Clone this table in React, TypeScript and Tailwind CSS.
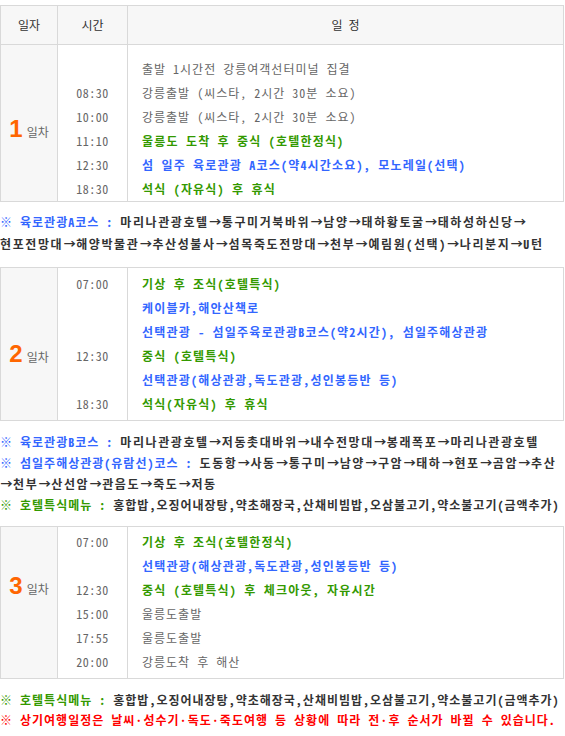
type Tone = "gray" | "green" | "blue";
type Row = { time?: string; text: string; tone: Tone };

const toneClass: Record<Tone, string> = {
  gray: "text-[#666666] tracking-[1px]",
  green: "text-[#339900] font-bold tracking-[1.2px]",
  blue: "text-[#3366ff] font-bold tracking-[1.2px]",
};

const day1: Row[] = [
  { text: "출발 1시간전 강릉여객선터미널 집결", tone: "gray" },
  { time: "08:30", text: "강릉출발 (씨스타, 2시간 30분 소요)", tone: "gray" },
  { time: "10:00", text: "강릉출발 (씨스타, 2시간 30분 소요)", tone: "gray" },
  { time: "11:10", text: "울릉도 도착 후 중식 (호텔한정식)", tone: "green" },
  { time: "12:30", text: "섬 일주 육로관광 A코스(약4시간소요), 모노레일(선택)", tone: "blue" },
  { time: "18:30", text: "석식 (자유식) 후 휴식", tone: "green" },
];

const day2: Row[] = [
  { time: "07:00", text: "기상 후 조식(호텔특식)", tone: "green" },
  { text: "케이블카,해안산책로", tone: "blue" },
  { text: "선택관광 - 섬일주육로관광B코스(약2시간), 섬일주해상관광", tone: "blue" },
  { time: "12:30", text: "중식 (호텔특식)", tone: "green" },
  { text: "선택관광(해상관광,독도관광,성인봉등반 등)", tone: "blue" },
  { time: "18:30", text: "석식(자유식) 후 휴식", tone: "green" },
];

const day3: Row[] = [
  { time: "07:00", text: "기상 후 조식(호텔한정식)", tone: "green" },
  { text: "선택관광(해상관광,독도관광,성인봉등반 등)", tone: "blue" },
  { time: "12:30", text: "중식 (호텔특식) 후 체크아웃, 자유시간", tone: "green" },
  { time: "15:00", text: "울릉도출발", tone: "gray" },
  { time: "17:55", text: "울릉도출발", tone: "gray" },
  { time: "20:00", text: "강릉도착 후 해산", tone: "gray" },
];

// arrows are full-width in the original font
function Arrowed({ text }: { text: string }) {
  const parts = text.split("→");
  return (
    <span className="tracking-[1.6px]">
      {parts.map((p, i) => (
        <span key={i}>
          {i > 0 && (
            <span className="inline-block w-[13px] text-center tracking-normal [font-feature-settings:normal]">→</span>
          )}
          {p}
        </span>
      ))}
    </span>
  );
}

function DayBody({
  day,
  rows,
  pad,
  labelPad,
}: {
  day: string;
  rows: Row[];
  pad: string;
  labelPad: string;
}) {
  return (
    <div className="flex">
      <div className={`w-[57px] shrink-0 border-r border-[#d9d9d9] bg-[#f7f7f7] ${labelPad}`}>
        <div className="flex items-baseline justify-center gap-[4px]">
          <span className="font-['Liberation_Sans',sans-serif] text-[24px] font-bold leading-[24px] text-[#ff6600]">
            {day}
          </span>
          <span className="text-[12px] text-[#666666]">일차</span>
        </div>
      </div>
      <div className={`w-[70px] shrink-0 border-r border-[#d9d9d9] ${pad}`}>
        {rows.map((r, i) => (
          <div key={i} className="h-[24px] text-center text-[12px] leading-[24px] tracking-[0.5px] text-[#666666]">
            {r.time ?? ""}
          </div>
        ))}
      </div>
      <div className={`min-w-0 flex-1 pl-[14px] ${pad}`}>
        {rows.map((r, i) => (
          <div
            key={i}
            className={`h-[24px] whitespace-nowrap text-[12px] leading-[24px] ${toneClass[r.tone]}`}
          >
            {r.text}
          </div>
        ))}
      </div>
    </div>
  );
}

function Note({ label, color, children }: { label: string; color: string; children?: React.ReactNode }) {
  return (
    <div className="whitespace-nowrap">
      <span className={color}>※ {label} : </span>
      {children}
    </div>
  );
}

export default function App() {
  return (
    <div className="w-[565px] overflow-hidden bg-white pt-[5px] font-['Noto_Sans_CJK_KR',sans-serif] text-[12px] [font-feature-settings:'hwid']">
      {/* day 1 with header */}
      <div className="w-[564px] border border-[#d9d9d9]">
        <div className="flex h-[39px] border-b border-[#d9d9d9] bg-[#f7f7f7] text-[#333333]">
          <div className="flex w-[57px] shrink-0 items-center justify-center border-r border-[#d9d9d9]">일자</div>
          <div className="flex w-[70px] shrink-0 items-center justify-center border-r border-[#d9d9d9]">시간</div>
          <div className="flex flex-1 items-center justify-center">일 정</div>
        </div>
        <DayBody day="1" rows={day1} pad="pt-[12px]" labelPad="pt-[72px]" />
      </div>

      <div className="mt-[9px] mb-[12px] font-bold leading-[22px] tracking-[1px] text-[#333333]">
        <Note label="육로관광A코스" color="text-[#3366ff]">
          <Arrowed text="마리나관광호텔→통구미거북바위→남양→태하황토굴→태하성하신당→" />
        </Note>
        <div className="whitespace-nowrap">
          <Arrowed text="현포전망대→해양박물관→추산성불사→섬목죽도전망대→천부→예림원(선택)→나리분지→U턴" />
        </div>
      </div>

      <div className="w-[564px] border border-[#d9d9d9]">
        <DayBody day="2" rows={day2} pad="py-[4px]" labelPad="pt-[74px]" />
      </div>

      <div className="mt-[10px] mb-[11px] font-bold leading-[21px] tracking-[1px] text-[#333333]">
        <Note label="육로관광B코스" color="text-[#3366ff]">
          <Arrowed text="마리나관광호텔→저동촛대바위→내수전망대→봉래폭포→마리나관광호텔" />
        </Note>
        <Note label="섬일주해상관광(유람선)코스" color="text-[#3366ff]">
          <Arrowed text="도동항→사동→통구미→남양→구암→태하→현포→곰암→추산" />
        </Note>
        <div className="whitespace-nowrap">
          <Arrowed text="→천부→산선암→관음도→죽도→저동" />
        </div>
        <Note label="호텔특식메뉴" color="text-[#339900]">
          홍합밥,오징어내장탕,약초해장국,산채비빔밥,오삼불고기,약소불고기(금액추가)
        </Note>
      </div>

      <div className="w-[564px] border border-[#d9d9d9]">
        <DayBody day="3" rows={day3} pad="pt-[3px] pb-[4px]" labelPad="pt-[47px]" />
      </div>

      <div className="mt-[11px] pb-[6px] font-bold leading-[20px] tracking-[1px] text-[#333333]">
        <Note label="호텔특식메뉴" color="text-[#339900]">
          홍합밥,오징어내장탕,약초해장국,산채비빔밥,오삼불고기,약소불고기(금액추가)
        </Note>
        <div className="whitespace-nowrap text-[#ff0000]">
          ※ 상기여행일정은 날씨·성수기·독도·죽도여행 등 상황에 따라 전·후 순서가 바뀔 수 있습니다.
        </div>
      </div>
    </div>
  );
}
